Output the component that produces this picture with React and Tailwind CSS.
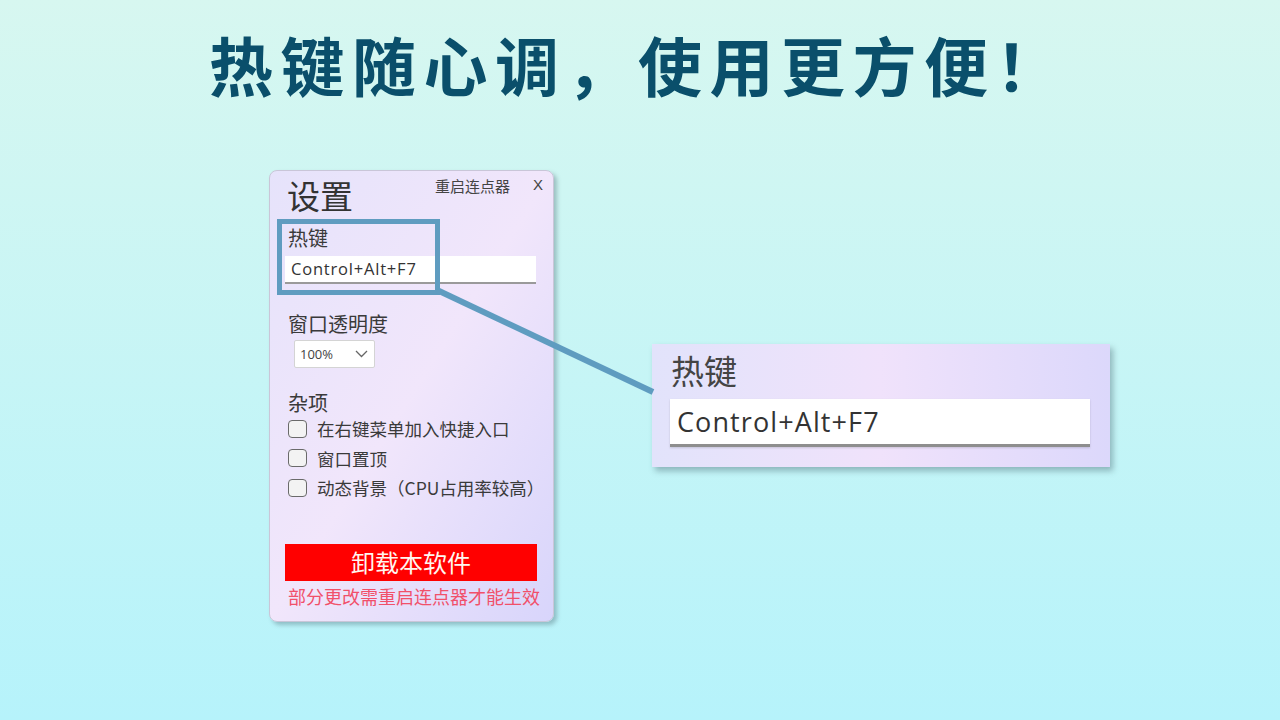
import React from "react";

const cjk = { fontFamily: '"Noto Sans CJK SC", "Noto Sans", sans-serif' };
const latin = { fontFamily: '"Open Sans", "Noto Sans CJK SC", sans-serif' };

function Checkbox({ label }) {
  return (
    <div className="flex items-center h-[29.5px]">
      <div className="shrink-0 w-[19px] h-[18px] rounded-[4px] border-[1.5px] border-[#6a6a6a] bg-[#f3f3f3] ml-[3px]" />
      <span className="shrink-0 ml-[10px] text-[17.5px] leading-none text-[#3a3a3a] whitespace-nowrap">{label}</span>
    </div>
  );
}

export default function App() {
  return (
    <div
      className="relative w-[1280px] h-[720px] overflow-hidden bg-gradient-to-b from-[#d7f7f0] to-[#b6f3fb]"
      style={cjk}
    >
      <div className="h-[170px] flex justify-center pt-[31px]">
        <h1 className="text-[64px] leading-[64px] font-bold tracking-[7.5px] text-[#0a4f6b] ml-[-4px]">
          热键随心调，使用更方便！
        </h1>
      </div>

      <div className="flex items-start pl-[269px]">
        {/* Settings dialog */}
        <div className="w-[285px] h-[452px] rounded-[8px] border border-[#c9c6d8] bg-gradient-to-br from-[#e6e3fb] via-[#f1e6fb] to-[#d8d5fb] shadow-[3px_3px_4px_rgba(60,90,100,0.35)] flex flex-col px-[15px]">
          <div className="flex items-start justify-between h-[48px]">
            <span className="text-[33px] leading-none text-[#333] mt-[8px] ml-[2px]">设置</span>
            <div className="flex items-start mt-[6px]">
              <span className="text-[15px] leading-none text-[#444] mt-[1px]">重启连点器</span>
              <span className="ml-[23px] text-[15px] leading-none text-[#444] mr-[-5px]" style={{ fontFamily: '"Liberation Sans", sans-serif' }}>X</span>
            </div>
          </div>
          <span className="text-[20px] leading-none text-[#3a3a3a] mt-[9px] ml-[3px]">热键</span>
          <div className="mt-[8px] h-[28px] w-[251px] bg-white border-b-[2px] border-[#9a9a9a] flex items-center pl-[6px]">
            <span className="text-[16.5px] leading-none tracking-[0.8px] text-[#333]" style={latin}>Control+Alt+F7</span>
          </div>

          <span className="text-[20px] leading-none text-[#3a3a3a] mt-[30px] ml-[3px]">窗口透明度</span>
          <div className="mt-[6px] ml-[9px] w-[81px] h-[28px] bg-white border border-[#d4d4d4] rounded-[2px] flex items-center justify-between pl-[5px] pr-[6px]">
            <span className="text-[13px] leading-none text-[#444]" style={latin}>100%</span>
            <svg width="13" height="8" viewBox="0 0 13 8">
              <path d="M1 1 L6.5 6.5 L12 1" fill="none" stroke="#666" strokeWidth="1.3" />
            </svg>
          </div>

          <span className="text-[20px] leading-none text-[#3a3a3a] mt-[25px] ml-[3px]">杂项</span>
          <div className="flex flex-col mt-[1px]">
            <Checkbox label="在右键菜单加入快捷入口" />
            <Checkbox label="窗口置顶" />
            <Checkbox label="动态背景（CPU占用率较高）" />
          </div>

          <div className="mt-[41px] w-[252px] h-[37px] bg-[#ff0000] flex items-center justify-center">
            <span className="text-[24px] leading-none text-[#fff6f0]">卸载本软件</span>
          </div>
          <span className="mt-[6px] ml-[3px] text-[18px] leading-none text-[#f1506a] whitespace-nowrap">部分更改需重启连点器才能生效</span>
        </div>

        {/* Zoomed callout */}
        <div className="ml-[98px] mt-[174px] w-[458px] h-[123px] bg-gradient-to-r from-[#e2e3fb] via-[#f0e2fb] to-[#dcd8fb] shadow-[3px_4px_6px_rgba(60,90,100,0.4)] flex flex-col pl-[18px]">
          <span className="text-[33px] leading-none text-[#444] mt-[10px] ml-[1px]">热键</span>
          <div className="mt-[12px] w-[420px] h-[48px] bg-white border-b-[3px] border-[#8e8e8e] shadow-[0_1px_2px_rgba(0,0,0,0.15)] flex items-center pl-[7px]">
            <span className="text-[27px] leading-none tracking-[1.1px] text-[#333]" style={latin}>Control+Alt+F7</span>
          </div>
        </div>
      </div>

      {/* highlight overlay */}
      <svg className="absolute inset-0 pointer-events-none" width="1280" height="720">
        <rect x="279.5" y="221.5" width="158" height="71" fill="none" stroke="#5f9cc0" strokeWidth="5" />
        <line x1="437" y1="290" x2="653" y2="392" stroke="#5f9cc0" strokeWidth="6" />
      </svg>
    </div>
  );
}
